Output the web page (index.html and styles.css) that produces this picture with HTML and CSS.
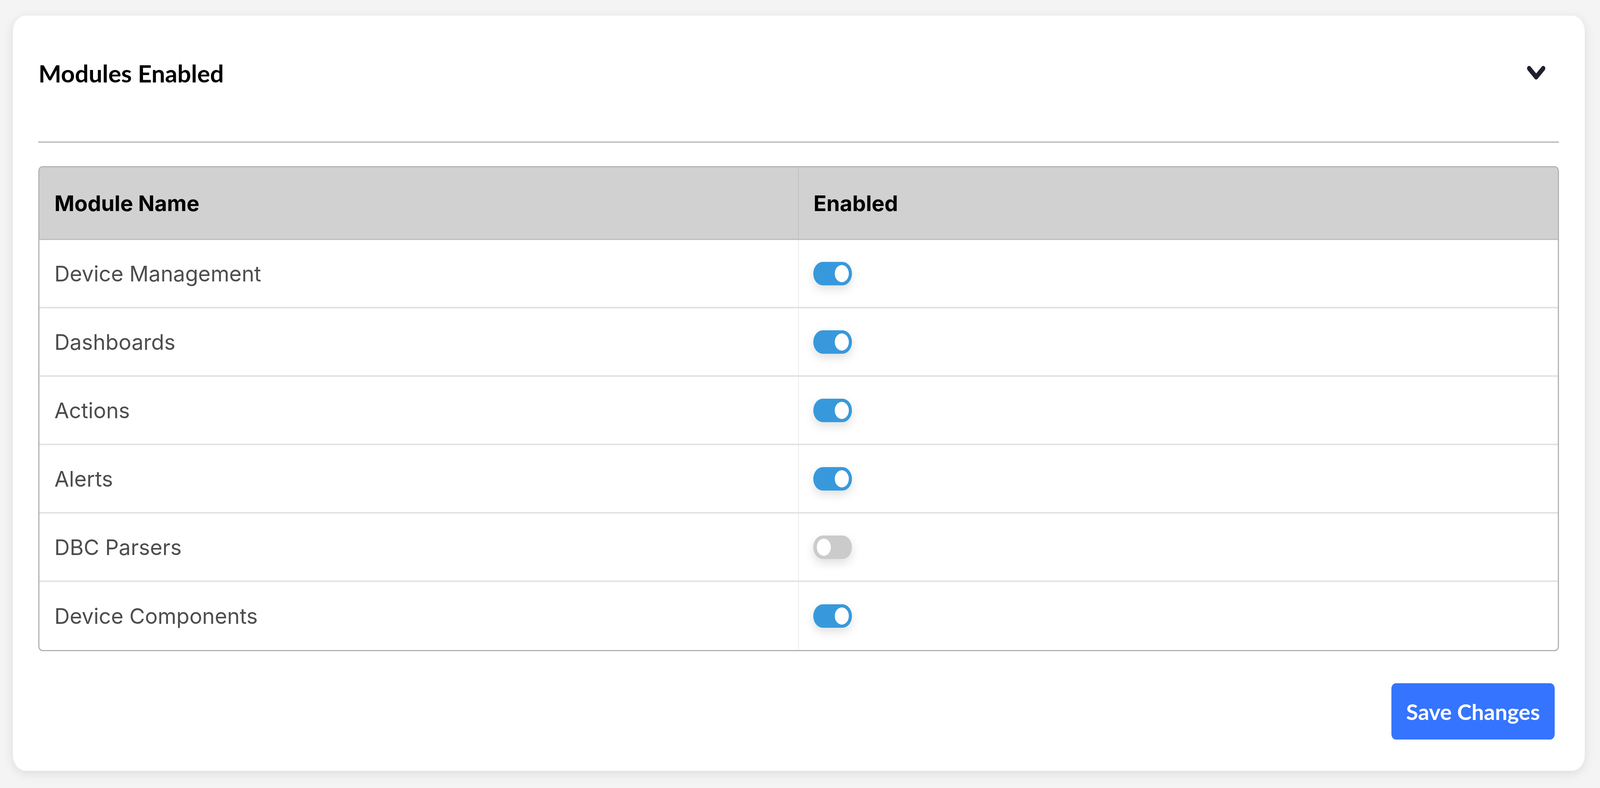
FILE: index.html
```html
<!DOCTYPE html>
<html lang="en">
<head>
    <meta charset="UTF-8" />
    <meta name="viewport" content="width=device-width, initial-scale=1.0" />
    <title>Modules Enabled</title>
    <link rel="stylesheet" href="styles.css">
</head>
<body>
    <div class="card">
        <div class="card-header">
            <h2>Modules Enabled</h2>
            <span class="chevron">
                <svg viewBox="0 0 60 40" preserveAspectRatio="none">
                    <polyline points="8,8 30,30 52,8" fill="none" stroke="#1f1f2e" stroke-width="13" stroke-linecap="round" stroke-linejoin="round" />
                </svg>
            </span>
        </div>
        <hr class="divider" />

        <div class="modules">
            <div class="row head">
                <div class="cell">Module Name</div>
                <div class="cell">Enabled</div>
            </div>
            <div class="row">
                <div class="cell name">Device Management</div>
                <div class="cell"><span class="switch on"><span class="knob"></span></span></div>
            </div>
            <div class="row">
                <div class="cell name">Dashboards</div>
                <div class="cell"><span class="switch on"><span class="knob"></span></span></div>
            </div>
            <div class="row">
                <div class="cell name">Actions</div>
                <div class="cell"><span class="switch on"><span class="knob"></span></span></div>
            </div>
            <div class="row">
                <div class="cell name">Alerts</div>
                <div class="cell"><span class="switch on"><span class="knob"></span></span></div>
            </div>
            <div class="row">
                <div class="cell name">DBC Parsers</div>
                <div class="cell"><span class="switch off"><span class="knob"></span></span></div>
            </div>
            <div class="row">
                <div class="cell name">Device Components</div>
                <div class="cell"><span class="switch on"><span class="knob"></span></span></div>
            </div>
        </div>

        <div class="actions">
            <button class="btn-save">Save Changes</button>
        </div>
    </div>
</body>
</html>
```

FILE: styles.css
```css
/* widths follow the screen: --u is one px of a 4992px wide window */
:root {
    --u: calc(100vw / 4992);
}
* {
    margin: 0;
    box-sizing: border-box;
}
body {
    background: #f4f4f4;
    padding: 40px calc(48 * var(--u)) 44px calc(40 * var(--u));
    font-family: "Lato", sans-serif;
}
.card {
    background: #fff;
    border-radius: calc(40 * var(--u)) / 40px;
    box-shadow: 0 6px 28px rgba(0, 0, 0, 0.1);
    padding: 0 calc(80 * var(--u)) 80px;
}
.card-header {
    height: 294px;
    display: flex;
    align-items: center;
    justify-content: space-between;
}
.card-header h2 {
    font-size: 62px;
    font-weight: 700;
    color: #000;
}
.chevron {
    display: flex;
    width: calc(60 * var(--u));
    height: 40px;
    margin-right: calc(41 * var(--u));
}
.chevron svg {
    width: 100%;
    height: 100%;
}
.divider {
    border: none;
    height: 3px;
    background: #b3b3b3;
    margin-top: 28px;
}
.modules {
    margin-top: 60px;
    border: 3px solid #b3b3b3;
    border-radius: calc(13 * var(--u)) / 13px;
    overflow: hidden;
}
.row {
    display: grid;
    grid-template-columns: 1fr 1fr;
    height: 175px;
    border-bottom: 4px solid #e3e3df;
}
.row:last-child {
    height: 174px;
    border-bottom: none;
}
.cell {
    display: flex;
    align-items: center;
    padding-left: calc(46 * var(--u));
}
.cell:first-child {
    border-right: calc(3 * var(--u)) solid #ebebeb;
}
.head {
    height: 186px;
    background: #d1d1d1;
    border-bottom: 3px solid #bdbdbd;
}
.head .cell {
    font-family: "Inter", sans-serif;
    font-size: 55px;
    font-weight: 700;
    color: #000;
}
.head .cell:first-child {
    border-right-color: #c2c2c2;
}
.name {
    font-family: "Inter", sans-serif;
    font-size: 54.5px;
    color: #4d4d4d;
}
.switch {
    display: flex;
    align-items: center;
    width: calc(120 * var(--u));
    height: 60px;
    padding: 0 calc(10 * var(--u));
    border-radius: calc(30 * var(--u)) / 30px;
    box-shadow: 0 10px 24px rgba(0, 0, 0, 0.13);
}
.switch.on {
    background: #3799dc;
    justify-content: flex-end;
}
.switch.off {
    background: #cbcbcb;
    justify-content: flex-start;
}
.knob {
    width: calc(44 * var(--u));
    height: 44px;
    border-radius: 50%;
    background: #fff;
}
.actions {
    display: flex;
    justify-content: flex-end;
    margin-top: 82px;
    padding-right: calc(13 * var(--u));
}
.btn-save {
    width: calc(510 * var(--u));
    height: 144px;
    border: none;
    border-radius: calc(14 * var(--u)) / 14px;
    background: #3574fe;
    color: #fff;
    font-family: "Lato", sans-serif;
    font-size: 56px;
    font-weight: 700;
}
```
